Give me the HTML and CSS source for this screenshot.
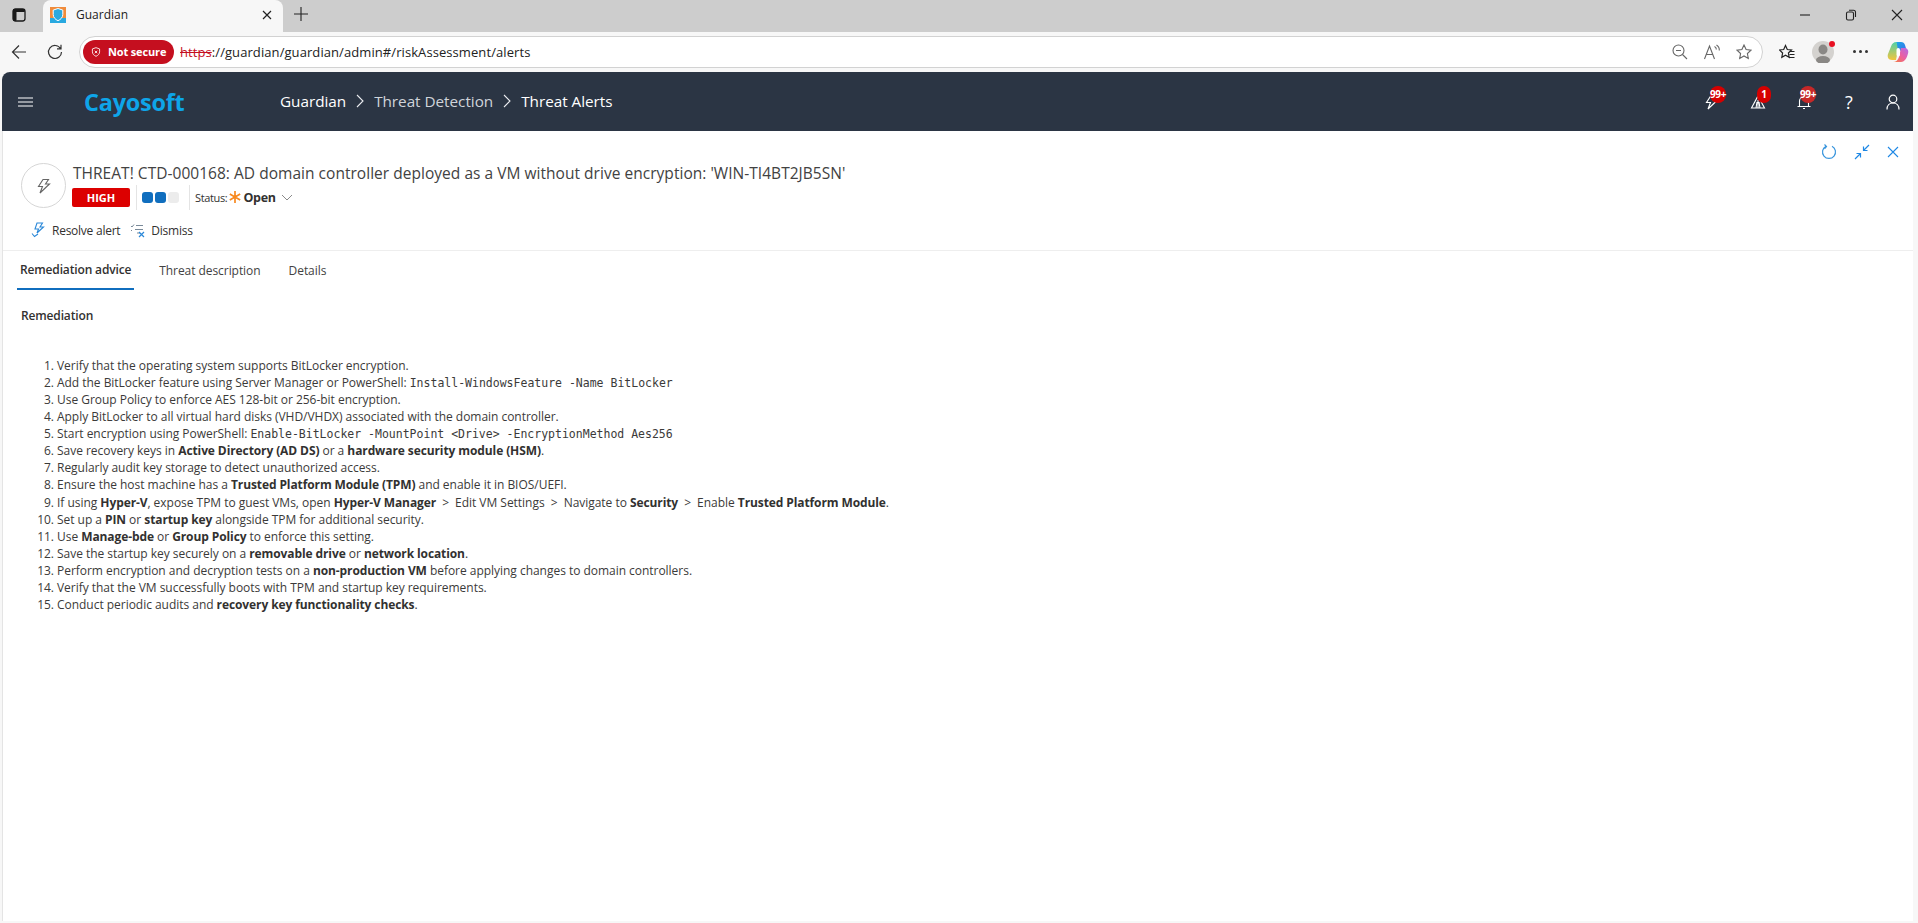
FILE: index.html
```html
<!DOCTYPE html>
<html lang="en">
<head>
<meta charset="utf-8">
<title>Guardian</title>
<link rel="stylesheet" href="styles.css">
</head>
<body>
<div class="tabstrip">
  <div class="tabstrip-left">
    <svg class="ic-tabs" viewBox="0 0 14 14" width="14" height="14"><rect x="1" y="1" width="12" height="12" rx="2.500" fill="none" stroke="#1a1a1a" stroke-width="1.300"/><rect x="1" y="1" width="3.500" height="12" rx="1" fill="#1a1a1a"/><rect x="1" y="1" width="12" height="3" rx="1" fill="#1a1a1a"/></svg>
    <div class="tab">
      <svg class="favicon" viewBox="0 0 16 16" width="16" height="16"><rect width="16" height="16" fill="#f08c3c"/><rect y="11" width="16" height="5" fill="#29a9e0"/><path d="M8 1.500l4.800 1.600v4.400c0 3-2.200 5-4.800 6.200-2.600-1.200-4.800-3.200-4.800-6.200V3.100z" fill="#29a9e0" stroke="#fff" stroke-width="1"/></svg>
      <span class="tab-title">Guardian</span>
      <svg class="tab-close" viewBox="0 0 10 10" width="10" height="10"><path d="M1 1l8 8M9 1l-8 8" stroke="#222" stroke-width="1.200" fill="none"/></svg>
    </div>
    <svg class="ic-new" viewBox="0 0 14 14" width="14" height="14"><path d="M7 0v14M0 7h14" stroke="#222" stroke-width="1.100" fill="none"/></svg>
  </div>
  <div class="winctl">
    <svg viewBox="0 0 12 12" width="12" height="12"><path d="M1 6h10" stroke="#222" stroke-width="1.100"/></svg>
    <svg viewBox="0 0 12 12" width="12" height="12"><rect x="1.500" y="3" width="7" height="8" rx="1.500" fill="none" stroke="#222" stroke-width="1.100"/><path d="M4 1.200h4.500a2 2 0 0 1 2 2V8" fill="none" stroke="#222" stroke-width="1.100"/></svg>
    <svg viewBox="0 0 12 12" width="12" height="12"><path d="M1 1l10 10M11 1L1 11" stroke="#222" stroke-width="1.100"/></svg>
  </div>
</div>
<div class="toolbar">
  <svg class="nav-back" viewBox="0 0 16 16" width="16" height="16"><path d="M15 8H1.500M8 1.500L1.500 8 8 14.500" fill="none" stroke="#333" stroke-width="1.200"/></svg>
  <svg class="nav-reload" viewBox="0 0 16 16" width="16" height="16"><path d="M13.500 4.500A6.500 6.500 0 1 0 14.500 8M14 0.800v4h-4" fill="none" stroke="#333" stroke-width="1.200"/></svg>
  <div class="omnibox">
    <div class="pill">
      <svg viewBox="0 0 12 12" width="10" height="12"><path d="M6 .8l4.300 1.500v3.500c0 2.700-1.900 4.300-4.300 5.400C3.600 10.100 1.700 8.500 1.700 5.800V2.300zM4.500 4.500l3 3M7.500 4.500l-3 3" fill="none" stroke="#fff" stroke-width="1"/></svg>
      <span>Not secure</span>
    </div>
    <span class="url"><span class="url-https">https</span>://guardian/guardian/admin#/riskAssessment/alerts</span>
    <div class="omni-icons">
      <svg viewBox="0 0 16 16" width="16" height="16"><circle cx="6.500" cy="6.500" r="5.500" fill="none" stroke="#666" stroke-width="1.100"/><path d="M4 6.500h5M10.500 10.500l4.500 4.500" stroke="#666" stroke-width="1.100"/></svg>
      <svg viewBox="0 0 18 16" width="18" height="16"><path d="M1.500 15L6.500 2l5 13M3.200 10.500h6.600M11.500 2.500a3 3 0 0 1 1.800 3M13.500 1a6 6 0 0 1 2.800 5.500" fill="none" stroke="#666" stroke-width="1.100"/></svg>
      <svg viewBox="0 0 16 16" width="16" height="16"><path d="M8 1l2.100 4.500 4.900.6-3.600 3.400.9 4.900L8 12l-4.300 2.400.9-4.900L1 6.100l4.900-.6z" fill="none" stroke="#666" stroke-width="1.100"/></svg>
    </div>
  </div>
  <div class="tool-icons">
    <svg class="ic-fav" viewBox="0 0 16 16" width="16" height="16"><path d="M6.500 1.500l1.800 4 4.200.5-3.100 3 .8 4.300-3.700-2.100-3.700 2.100.8-4.300L.5 6l4.200-.5z" fill="none" stroke="#222" stroke-width="1.200"/><path d="M11 7.500h4.500M10.500 10.500h5M10 13.500h5.500" stroke="#222" stroke-width="1.100"/></svg>
    <div class="avatar">
      <svg viewBox="0 0 22 22" width="22" height="22"><circle cx="11" cy="11" r="11" fill="#d4d2cf"/><ellipse cx="11" cy="8.500" rx="4.500" ry="5" fill="#8a8885"/><ellipse cx="11" cy="19" rx="7" ry="4" fill="#8a8885"/></svg>
      <i class="avatar-dot"></i>
    </div>
    <span class="dots"><i></i><i></i><i></i></span>
    <svg class="copilot" viewBox="0 0 22 22" width="22" height="22"><defs><linearGradient id="cpa" x1="0" y1="0" x2="1" y2="1"><stop offset="0" stop-color="#19a8e8"/><stop offset="1" stop-color="#3a6fe8"/></linearGradient><linearGradient id="cpb" x1="0" y1="1" x2="1" y2="0"><stop offset="0" stop-color="#f4803a"/><stop offset=".5" stop-color="#ec5fa0"/><stop offset="1" stop-color="#b06bea"/></linearGradient><linearGradient id="cpc" x1="0" y1="0" x2="0" y2="1"><stop offset="0" stop-color="#4fd0a8"/><stop offset="1" stop-color="#f2c53d"/></linearGradient></defs><path d="M9 1h5c2 0 3.500 1 4 3l1.500 5-9 1z" fill="url(#cpa)"/><path d="M9.500 1C6.500 1 5 2.500 4 5.500L1 13c-1 3 .5 6 4 6h4l2-10z" fill="url(#cpc)"/><path d="M14 7h3.500c3 0 4.500 2.500 3.500 5.500-1 4-3 8.500-7 8.500H6c3 0 5-2 6-5z" fill="url(#cpb)"/><rect x="9.500" y="7" width="3.500" height="8.500" rx="1.750" fill="#fff"/></svg>
  </div>
</div>
<div class="app">
  <header class="appbar">
    <div class="appbar-left">
      <svg class="burger" viewBox="0 0 15 10" width="15" height="10"><path d="M0 1h15M0 5h15M0 9h15" stroke="#fff" stroke-width="1.100"/></svg>
      <span class="logo">Cayosoft</span>
      <nav class="crumbs">
        <span class="crumb-on">Guardian</span>
        <svg viewBox="0 0 8 14" width="8" height="14"><path d="M1 1l6 6-6 6" fill="none" stroke="#e8eaee" stroke-width="1.100"/></svg>
        <span class="crumb-mid">Threat Detection</span>
        <svg viewBox="0 0 8 14" width="8" height="14"><path d="M1 1l6 6-6 6" fill="none" stroke="#e8eaee" stroke-width="1.100"/></svg>
        <span class="crumb-on">Threat Alerts</span>
      </nav>
    </div>
    <div class="appbar-right">
      <div class="hd-ic">
        <svg viewBox="0 0 16 16" width="16" height="16"><path d="M7 1.500h5.500L9.500 6h4L4 15l2.500-6.500h-4z" fill="none" stroke="#fff" stroke-width="1.100"/></svg>
        <span class="count count-bolt">99+</span>
      </div>
      <div class="hd-ic">
        <svg viewBox="0 0 16 16" width="16" height="16"><path d="M8 2l6.500 12h-13zM8 6v8M6 14l1-6M10 14L9 8" fill="none" stroke="#fff" stroke-width="1.100"/></svg>
        <span class="count count-one">1</span>
      </div>
      <div class="hd-ic">
        <svg viewBox="0 0 16 16" width="16" height="16"><path d="M3.500 12V7a4.500 4.500 0 0 1 9 0v5M1.500 12.500h13M7 14.500h2" fill="none" stroke="#fff" stroke-width="1.100"/></svg>
        <span class="count count-bell">99+</span>
      </div>
      <span class="hd-help">?</span>
      <svg class="hd-user" viewBox="0 0 14 16" width="14" height="16"><circle cx="7" cy="5" r="3.800" fill="none" stroke="#fff" stroke-width="1.200"/><path d="M1 15.500c0-4 2.500-6.500 6-6.500s6 2.500 6 6.500" fill="none" stroke="#fff" stroke-width="1.200"/></svg>
    </div>
  </header>
  <main class="panel">
    <div class="panel-tools">
      <svg viewBox="0 0 16 16" width="16" height="16"><path d="M5 2.200A6.500 6.500 0 1 0 11 2.200" fill="none" stroke="#3a96dd" stroke-width="1.200"/><path d="M3.500.5L5.500 2.500 3.500 4.800" fill="none" stroke="#3a96dd" stroke-width="1.200"/></svg>
      <svg viewBox="0 0 16 16" width="16" height="16"><path d="M15 1L9.500 6.500M9.500 2.500v4h4M1 15l5.500-5.500M6.500 13.500v-4h-4" fill="none" stroke="#1e88e5" stroke-width="1.200"/></svg>
      <svg viewBox="0 0 12 12" width="12" height="12"><path d="M1 1l10 10M11 1L1 11" stroke="#1e88e5" stroke-width="1.100"/></svg>
    </div>
    <section class="alert-head">
      <div class="alert-circle">
        <svg viewBox="0 0 16 16" width="16" height="16"><path d="M7 1.500h5.500L9.500 6h4L4 15l2.500-6.500h-4z" fill="none" stroke="#666" stroke-width="1.100"/></svg>
      </div>
      <div class="alert-text">
        <h1 class="alert-title">THREAT! CTD-000168: AD domain controller deployed as a VM without drive encryption: 'WIN-TI4BT2JB5SN'</h1>
        <div class="alert-meta">
          <span class="sev">HIGH</span>
          <span class="bars"><i class="bar bar-on"></i><i class="bar bar-on"></i><i class="bar"></i></span>
          <span class="status-label">Status:</span>
          <svg class="star" viewBox="0 0 12 12" width="12" height="12"><path d="M6 0v12M.8 3l10.400 6M11.200 3L.8 9" stroke="#f7891f" stroke-width="1.700"/></svg>
          <span class="status-val">Open</span>
          <svg class="chev" viewBox="0 0 12 7" width="12" height="7"><path d="M1 1l5 5 5-5" fill="none" stroke="#8a8a8a" stroke-width="1"/></svg>
        </div>
      </div>
    </section>
    <div class="actions">
      <span class="action">
        <svg viewBox="0 0 14 16" width="14" height="16"><path d="M6 1h5.500L9 5h3.500L6 11l1.500-4H4z" fill="none" stroke="#2b88d8" stroke-width="1.100"/><path d="M1 11.500l2.500 3L7 12" fill="none" stroke="#2b88d8" stroke-width="1.100"/></svg>
        <span>Resolve alert</span>
      </span>
      <span class="action action-dismiss">
        <svg viewBox="0 0 16 16" width="16" height="16"><path d="M1 4l1 1 2-2.500M6 3.500h7M1 8l1 1M5 7.500h8M7 11h3" fill="none" stroke="#7a8a99" stroke-width="1"/><path d="M9 10l5 5M14 10l-5 5" stroke="#2b88d8" stroke-width="1.200"/></svg>
        <span>Dismiss</span>
      </span>
    </div>
    <div class="tabs">
      <span class="tb tb-on">Remediation advice</span>
      <span class="tb">Threat description</span>
      <span class="tb">Details</span>
    </div>
    <article class="content">
      <h2 class="content-h">Remediation</h2>
      <ol class="steps">
        <li>Verify that the operating system supports BitLocker encryption.</li>
        <li>Add the BitLocker feature using Server Manager or PowerShell: <code>Install-WindowsFeature -Name BitLocker</code></li>
        <li>Use Group Policy to enforce AES 128-bit or 256-bit encryption.</li>
        <li>Apply BitLocker to all virtual hard disks (VHD/VHDX) associated with the domain controller.</li>
        <li>Start encryption using PowerShell: <code>Enable-BitLocker -MountPoint &lt;Drive&gt; -EncryptionMethod Aes256</code></li>
        <li>Save recovery keys in <b>Active Directory (AD DS)</b> or a <b>hardware security module (HSM)</b>.</li>
        <li>Regularly audit key storage to detect unauthorized access.</li>
        <li>Ensure the host machine has a <b>Trusted Platform Module (TPM)</b> and enable it in BIOS/UEFI.</li>
        <li>If using <b>Hyper-V</b>, expose TPM to guest VMs, open <b>Hyper-V Manager</b> <span class="gt">&gt;</span> Edit VM Settings <span class="gt">&gt;</span> Navigate to <b>Security</b> <span class="gt">&gt;</span> Enable <b>Trusted Platform Module</b>.</li>
        <li>Set up a <b>PIN</b> or <b>startup key</b> alongside TPM for additional security.</li>
        <li>Use <b>Manage-bde</b> or <b>Group Policy</b> to enforce this setting.</li>
        <li>Save the startup key securely on a <b>removable drive</b> or <b>network location</b>.</li>
        <li>Perform encryption and decryption tests on a <b>non-production VM</b> before applying changes to domain controllers.</li>
        <li>Verify that the VM successfully boots with TPM and startup key requirements.</li>
        <li>Conduct periodic audits and <b>recovery key functionality checks</b>.</li>
      </ol>
    </article>
  </main>
</div>
</body>
</html>
```
FILE: styles.css
```css
* { box-sizing: border-box; }
html, body { height: 100%; }
body {
  margin: 0;
  height: 923px;
  overflow: hidden;
  display: flex;
  flex-direction: column;
  background: #f7f7f7;
  font-family: "Open Sans", "Noto Sans", sans-serif;
  color: #323130;
}
svg { display: block; flex: none; }
.tabstrip {
  height: 32px;
  flex: none;
  background: #cdcdcd;
  display: flex;
  justify-content: space-between;
}
.tabstrip-left { display: flex; align-items: center; }
.ic-tabs { margin-left: 12px; margin-bottom: 2px; }
.tab {
  width: 240px;
  height: 32px;
  margin-left: 17px;
  background: #f7f7f7;
  border-radius: 8px 8px 0 0;
  display: flex;
  align-items: center;
  padding: 0 0 0 7px;
}
.favicon { margin-right: 10px; margin-bottom: 2px; }
.tab-title { font-size: 12px; color: #222; flex: 1; margin-bottom: 4px; }
.tab-close { margin-right: 11px; margin-bottom: 3px; }
.ic-new { margin-left: 11px; margin-bottom: 4px; }
.winctl { display: flex; align-items: center; gap: 34px; padding: 0 15px 2px 0; }
.toolbar {
  height: 40px;
  flex: none;
  background: #f7f7f7;
  display: flex;
  align-items: center;
  padding: 0 7px 1px 11px;
}
.nav-reload { margin-left: 20px; }
.omnibox {
  margin-left: 16px;
  width: 1684px;
  height: 32px;
  flex: none;
  background: #fff;
  border: 1px solid #d2d2d2;
  border-radius: 16px;
  display: flex;
  align-items: center;
  padding: 0 10px 0 3px;
}
.pill {
  height: 24px;
  width: 91px;
  flex: none;
  background: #c50f1f;
  border-radius: 12px;
  color: #fff;
  display: flex;
  align-items: center;
  gap: 7px;
  padding: 0 0 0 8px;
  font-size: 11px;
  font-weight: 700;
  letter-spacing: -.15px;
}
.url { margin-left: 6px; font-size: 13px; letter-spacing: .08px; color: #222; flex: 1; }
.url-https { color: #c50f1f; text-decoration: line-through; }
.omni-icons { display: flex; align-items: center; gap: 15px; }
.tool-icons { display: flex; align-items: center; margin-left: 16px; }
.avatar { position: relative; margin-left: 17px; }
.avatar-dot {
  position: absolute;
  top: 0;
  right: -1px;
  width: 6px;
  height: 6px;
  border-radius: 50%;
  background: #e81123;
}
.dots { display: flex; gap: 3px; margin-left: 19px; }
.dots i { width: 3px; height: 3px; background: #333; border-radius: 50%; }
.copilot { margin-left: 19px; }
.app {
  flex: 1;
  margin: 0 5px 2px 2px;
  display: flex;
  flex-direction: column;
  background: #fff;
  border-radius: 8px 8px 0 0;
  overflow: hidden;
  min-height: 0;
}
.appbar {
  height: 59px;
  flex: none;
  background: #2b3544;
  display: flex;
  justify-content: space-between;
  align-items: center;
  color: #fff;
}
.appbar-left { display: flex; align-items: center; }
.burger { margin-left: 16px; }
.logo {
  margin-left: 51px;
  width: 101px;
  font-size: 23.400px;
  font-weight: 700;
  letter-spacing: -.2px;
  color: #0ea5e9;
  white-space: nowrap;
}
.crumbs { display: flex; align-items: center; margin-left: 95px; padding-bottom: 2px; font-size: 15.300px; letter-spacing: -.03px; gap: 10px; }
.crumb-on { color: #fff; }
.crumb-mid { color: #d0d4da; }
.appbar-right { display: flex; align-items: center; padding-right: 13px; gap: 30px; }
.hd-ic { position: relative; }
.count {
  position: absolute;
  top: -8px;
  height: 17px;
  border-radius: 9px;
  background: #d60000;
  color: #fff;
  font-size: 10px;
  font-weight: 700;
  line-height: 17px;
  text-align: center;
  letter-spacing: -.4px;
}
.count-bolt { left: 6px; width: 16px; }
.count-bell { left: 4px; width: 16px; background: #c62828; }
.count-one { left: 7px; width: 14px; }
.hd-help { font-size: 18px; width: 14px; text-align: center; color: #fff; }
.panel {
  flex: 1;
  position: relative;
  border-left: 1px solid #e4e4e4;
  min-height: 0;
}
.panel-tools {
  position: absolute;
  top: 13px;
  right: 14px;
  display: flex;
  align-items: center;
  gap: 17px;
}
.alert-head { display: flex; padding: 32px 0 0 18px; }
.alert-circle {
  width: 45px;
  height: 45px;
  flex: none;
  border: 1px solid #d6d6d6;
  border-radius: 50%;
  display: flex;
  align-items: center;
  justify-content: center;
}
.alert-text { margin-left: 6px; }
.alert-title {
  margin: -1px 0 0;
  padding-left: 1px;
  font-size: 15.500px;
  font-weight: 400;
  line-height: 22px;
  letter-spacing: .03px;
  color: #424242;
}
.alert-meta { display: flex; align-items: center; height: 22px; margin-top: 2px; font-size: 11px; }
.sev {
  width: 58px;
  height: 19px;
  background: #dc0000;
  border-radius: 2px;
  color: #fff;
  font-size: 11px;
  font-weight: 700;
  line-height: 19px;
  text-align: center;
}
.bars {
  display: flex;
  gap: 2px;
  height: 25px;
  align-items: center;
  margin-left: 6px;
  padding: 0 10px 0 5px;
  border-left: 1px solid #e4e4e4;
  border-right: 1px solid #e4e4e4;
}
.bar { width: 11px; height: 11px; border-radius: 3px; background: #ececec; }
.bar-on { background: #106ebe; }
.status-label { margin-left: 5px; color: #323130; letter-spacing: -.35px; }
.star { margin-left: 2px; }
.status-val { margin-left: 2px; font-size: 12.500px; font-weight: 700; letter-spacing: -.3px; color: #323130; }
.chev { margin-left: 5px; }
.actions { display: flex; align-items: center; height: 34px; padding-left: 28px; margin-top: 5px; font-size: 12px; letter-spacing: -.25px; }
.action { display: flex; align-items: center; gap: 7px; }
.action-dismiss { margin-left: 10px; gap: 5px; }
.tabs { display: flex; border-top: 1px solid #eeeeee; padding-left: 14px; height: 40px; margin-top: 3px; font-size: 12px; letter-spacing: -.06px; }
.tb { display: flex; align-items: center; padding: 0 3px; margin-right: 22px; height: 38px; color: #424242; }
.tb-on { border-bottom: 2px solid #106ebe; height: 39px; color: #323130; font-weight: 600; letter-spacing: -.15px; }
.content { padding: 17px 0 0 18px; }
.content-h { margin: 0; font-size: 12px; line-height: 17px; font-weight: 600; letter-spacing: -.15px; color: #323130; }
.steps {
  margin: 33px 0 0;
  padding: 0 0 0 36px;
  font-size: 12px;
  line-height: 17.070px;
  letter-spacing: -.03px;
  color: #3b3a39;
}
.steps b { font-weight: 700; color: #323130; letter-spacing: -.1px; }
.steps .gt { margin: 0 3px; }
.steps code { font-family: "DejaVu Sans Mono", monospace; font-size: 11.500px; line-height: 0; letter-spacing: 0; }
```
